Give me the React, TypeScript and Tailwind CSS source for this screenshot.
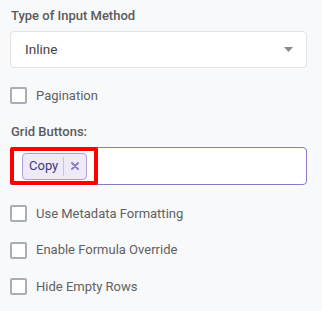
import React from "react";

function Checkbox({ label }: { label: string }) {
  return (
    <div className="flex items-center h-[17px]">
      <div className="w-[17px] h-[17px] border-2 border-[#a9aeb4] rounded-[2px] bg-white shrink-0" />
      <span className="ml-[9px] text-[13px] leading-[16px] text-[#616161]">{label}</span>
    </div>
  );
}

export default function App() {
  return (
    <div
      className="w-[322px] h-[311px] bg-[#f8f9fb] pl-[10px] pr-[15px] pt-[8px]"
      style={{ fontFamily: "Roboto, 'Liberation Sans', sans-serif" }}
    >
      <div className="pl-px text-[13px] leading-[16px] font-medium text-[#5b5b5b]">Type of Input Method</div>
      <div className="mt-[7px] h-[37px] bg-white border border-[#e4e4e4] rounded-[4px] flex items-center pl-[14px] pr-[13px]">
        <span className="text-[13.5px] text-[#444] flex-1">Inline</span>
        <svg width="9" height="5" viewBox="0 0 9 5">
          <path d="M0 0 L9 0 L4.5 5 Z" fill="#8a8a8a" />
        </svg>
      </div>
      <div className="mt-[19px]">
        <Checkbox label="Pagination" />
      </div>
      <div className="mt-[20px] pl-px text-[13px] leading-[16px] font-medium text-[#5b5b5b]">Grid Buttons:</div>
      <div className="mt-[7px] relative h-[38px] bg-white border border-[#8c79c6] rounded-[4px] flex items-center pl-[11px]">
        <div className="h-[27px] flex items-center bg-[#eeeaf7] border border-[#ab9fd8] rounded-[4px]">
          <span className="pl-[6px] pr-[5px] text-[13px] text-[#3c3a7c]">Copy</span>
          <span className="w-px h-[19px] bg-[#c9c1e6]" />
          <span className="w-[22px] flex items-center justify-center">
            <svg width="8" height="8" viewBox="0 0 8 8">
              <path d="M1 1 L7 7 M7 1 L1 7" stroke="#8b80c2" strokeWidth="2" strokeLinecap="round" />
            </svg>
          </span>
        </div>
        <div className="absolute -left-px -top-px -bottom-px w-[88px] border-[4px] border-[#ff0000] rounded-[2px]" />
      </div>
      <div className="mt-[20px] flex flex-col gap-[19.5px]">
        <Checkbox label="Use Metadata Formatting" />
        <Checkbox label="Enable Formula Override" />
        <Checkbox label="Hide Empty Rows" />
      </div>
    </div>
  );
}
